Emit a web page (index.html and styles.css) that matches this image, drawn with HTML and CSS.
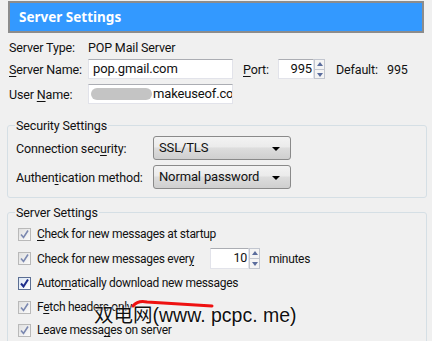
FILE: index.html
```html
<!DOCTYPE html>
<html lang="en">
<head>
    <meta charset="UTF-8">
    <title>Server Settings</title>
    <link rel="stylesheet" href="styles.css">
</head>
<body>
    <div class="header">Server Settings</div>

    <div class="info">
        <div class="row r1">
            <span class="label">Server Type:</span>
            <span>POP Mail Server</span>
        </div>
        <div class="row r2">
            <span class="label"><u>S</u>erver Name:</span>
            <span class="input wide">pop.gmail.com</span>
            <span class="port-label"><u>P</u>ort:</span>
            <span class="input port">995</span>
            <span class="spinner"><span class="up"></span><span class="down"></span></span>
            <span class="default">Default:</span>
            <span>995</span>
        </div>
        <div class="row r3">
            <span class="label">User <u>N</u>ame:</span>
            <span class="input wide user"><span class="blur"></span>makeuseof.cor</span>
        </div>
    </div>

    <fieldset class="group security">
        <legend>Security Settings</legend>
        <div class="row sec">
            <span class="sec-label">Connection sec<u>u</u>rity:</span>
            <span class="select">SSL/TLS<span class="arrow"></span></span>
        </div>
        <div class="row sec">
            <span class="sec-label">Authen<u>t</u>ication method:</span>
            <span class="select">Normal password<span class="arrow"></span></span>
        </div>
    </fieldset>

    <fieldset class="group server">
        <legend>Server Settings</legend>
        <div class="row check">
            <span class="box"><svg viewBox="0 0 9 9"><path d="M1 4.5 L3.5 7.5 L8 0.5" /></svg></span>
            <span><u>C</u>heck for new messages at startup</span>
        </div>
        <div class="row check tall">
            <span class="box"><svg viewBox="0 0 9 9"><path d="M1 4.5 L3.5 7.5 L8 0.5" /></svg></span>
            <span class="every">Check for new messages ever<u>y</u></span>
            <span class="input mins">10</span>
            <span class="spinner"><span class="up"></span><span class="down"></span></span>
            <span class="minutes">minutes</span>
        </div>
        <div class="row check">
            <span class="box on"><svg viewBox="0 0 9 9"><path d="M1 4.5 L3.5 7.5 L8 0.5" /></svg></span>
            <span>Auto<u>m</u>atically download new messages</span>
        </div>
        <div class="row check">
            <span class="box"><svg viewBox="0 0 9 9"><path d="M1 4.5 L3.5 7.5 L8 0.5" /></svg></span>
            <span>F<u>e</u>tch headers only</span>
        </div>
        <div class="row check short">
            <span class="box"><svg viewBox="0 0 9 9"><path d="M1 4.5 L3.5 7.5 L8 0.5" /></svg></span>
            <span>Leave messa<u>g</u>es on server</span>
        </div>
    </fieldset>

    <div class="watermark">双电网(www. pcpc. me)</div>
    <svg class="scribble" width="432" height="341" viewBox="0 0 432 341">
        <path d="M133 306 Q138 300 147 302 L212 306" />
    </svg>
</body>
</html>
```

FILE: styles.css
```css
body {
    margin: 0;
    width: 432px;
    height: 341px;
    overflow: hidden;
    position: relative;
    background: #f0f0f0;
    color: #111;
    font-family: Roboto, "Noto Sans", sans-serif;
    font-size: 12.5px;
    letter-spacing: -0.15px;
}

u {
    text-decoration-thickness: 1px;
    text-underline-offset: 2px;
}

.header {
    margin: 1px 8px 0 8px;
    height: 28px;
    border: 2px solid #8c8c8c;
    background: #3399ff;
    color: #fff;
    font-family: "Noto Sans", sans-serif;
    font-weight: bold;
    font-size: 13.5px;
    letter-spacing: 0;
    line-height: 28px;
    padding-left: 9px;
}

.row {
    display: flex;
    align-items: center;
    white-space: nowrap;
}

.info {
    padding: 3px 0 0 9px;
}

.info .row {
    height: 22px;
}

.r3 {
    margin-top: 3px;
}

.label {
    width: 79px;
}

.input {
    box-sizing: border-box;
    height: 20px;
    line-height: 18px;
    background: #fff;
    border: 1px solid #e2e3ea;
    border-top-color: #abadb3;
    padding: 0 4px;
    white-space: nowrap;
    overflow: hidden;
    font-size: 13px;
}

.wide {
    width: 145px;
}

.user {
    display: flex;
    align-items: center;
    padding-left: 2px;
}

.blur {
    display: inline-block;
    flex: none;
    width: 61px;
    height: 12px;
    border-radius: 6px;
    background: #c4c4c4;
    margin-right: 1px;
}

.port-label {
    margin-left: 10px;
    width: 35px;
}

.port {
    width: 36px;
    text-align: right;
    padding-right: 1px;
}

.spinner {
    display: flex;
    flex-direction: column;
    width: 11px;
    height: 20px;
    box-sizing: border-box;
    border: 1px solid #c2c6cf;
    background: #f4f4f4;
}

.spinner span {
    flex: 1;
    position: relative;
}

.spinner .up {
    border-bottom: 1px solid #c2c6cf;
}

.spinner .up::after,
.spinner .down::after {
    content: "";
    position: absolute;
    left: 2px;
    border-left: 3px solid transparent;
    border-right: 3px solid transparent;
}

.spinner .up::after {
    top: 2px;
    border-bottom: 4px solid #5a6c9c;
}

.spinner .down::after {
    top: 3px;
    border-top: 4px solid #5a6c9c;
}

.default {
    margin-left: 11px;
    width: 51px;
}

.group {
    margin: 0 5px 0 7px;
    border: 1px solid #d5dfe5;
    border-radius: 3px;
    padding: 0 0 0 8px;
}

.group legend {
    padding: 0 1px;
    margin-left: -1px;
}

.security {
    margin-top: 13px;
    height: 75px;
    padding-top: 3px;
}

.sec {
    height: 24px;
    margin-bottom: 5px;
}

.sec-label {
    width: 137px;
}

.select {
    box-sizing: border-box;
    position: relative;
    width: 138px;
    height: 24px;
    line-height: 22px;
    padding-left: 5px;
    border: 1px solid #8a8a8a;
    border-radius: 3px;
    background: linear-gradient(#f3f3f3, #ebebeb 45%, #dddddd 50%, #cfcfcf);
    font-size: 13px;
}

.arrow {
    position: absolute;
    right: 10px;
    top: 10px;
    border-left: 4px solid transparent;
    border-right: 4px solid transparent;
    border-top: 4px solid #000;
}

.server {
    margin-top: 7px;
    height: 200px;
    padding-top: 2px;
}

.check {
    height: 24px;
    padding-left: 2px;
    font-size: 12px;
    letter-spacing: -0.3px;
}

.check.tall {
    height: 25px;
}

.check.short {
    height: 22px;
}

.box {
    box-sizing: border-box;
    flex: none;
    width: 13px;
    height: 13px;
    margin-right: 6px;
    border: 1px solid #b9b9b9;
    background: linear-gradient(135deg, #e0e0e0, #fbfbfb);
    display: flex;
    align-items: center;
    justify-content: center;
}

.box svg {
    width: 9px;
    height: 9px;
    fill: none;
    stroke: #7b88b0;
    stroke-width: 1.6;
}

.box.on {
    border-color: #5b6e93;
    background: linear-gradient(135deg, #dbe6f4, #ffffff);
}

.box.on svg {
    stroke: #1c2d8c;
    stroke-width: 2;
}

.every {
    width: 173px;
}

.mins {
    width: 39px;
    text-align: right;
    padding-right: 1px;
    height: 21px;
    font-size: 12.5px;
}

.check .spinner {
    height: 21px;
}

.minutes {
    margin-left: 9px;
}

.watermark {
    position: absolute;
    left: 94px;
    top: 303px;
    font-family: "Liberation Sans", "Noto Sans CJK SC", sans-serif;
    font-size: 19.5px;
    line-height: 24px;
    letter-spacing: 0;
    color: #111;
    text-shadow: 0 0 2px #fff, 0 0 2px #fff;
    white-space: nowrap;
}

.scribble {
    position: absolute;
    left: 0;
    top: 0;
    pointer-events: none;
}

.scribble path {
    fill: none;
    stroke: #ee1111;
    stroke-width: 3;
    stroke-linecap: round;
}
```
